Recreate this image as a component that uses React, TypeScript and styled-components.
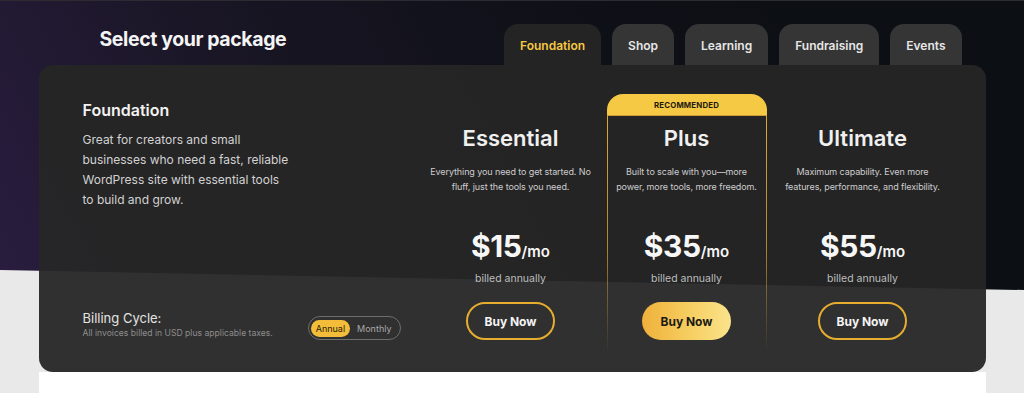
import React from "react";
import styled, { createGlobalStyle } from "styled-components";

const GlobalStyle = createGlobalStyle`
  html, body {
    margin: 0;
    padding: 0;
    background: #e9e9e9;
    overflow: hidden;
  }
  body {
    font-family: Inter, "Noto Sans", sans-serif;
    -webkit-font-smoothing: antialiased;
  }
`;

const Page = styled.div`
  position: relative;
  padding-top: 24px;

  /* slanted dark hero behind the card */
  &::before {
    content: "";
    position: absolute;
    top: 0;
    left: 0;
    right: 0;
    height: 290px;
    background: linear-gradient(62deg, #2a1d40 0%, #1a1626 28%, #101119 55%, #0c0f14 80%);
    clip-path: polygon(0 0, 100% 0, 100% 290px, 0 270px);
    border-top: 1px solid #2b2b31;
  }
`;

const Container = styled.div`
  position: relative;
  width: 947px;
  margin: 0 auto;
`;

const HeaderRow = styled.div`
  display: flex;
  justify-content: space-between;
  align-items: flex-start;
  padding: 0 24px 0 61px;
`;

const Heading = styled.h1`
  margin: 3px 0 0;
  font-size: 19.5px;
  line-height: 24px;
  font-weight: 700;
  color: #f4f4f4;
  letter-spacing: -0.4px;
`;

const Tabs = styled.div`
  display: flex;
  gap: 11px;
`;

const Tab = styled.button<{ $active?: boolean }>`
  height: 41px;
  padding: 2px 16px 0;
  border: 0;
  border-radius: 14px 14px 0 0;
  background: ${(p) => (p.$active ? "rgba(38, 38, 38, 0.95)" : "#353535")};
  color: ${(p) => (p.$active ? "#f5c842" : "#e6e6e6")};
  font-family: inherit;
  font-size: 12px;
  font-weight: 600;
  cursor: pointer;
`;

const Card = styled.section`
  display: grid;
  grid-template-columns: 1fr 160px 160px 160px;
  column-gap: 16px;
  height: 307px;
  box-sizing: border-box;
  padding: 29px 43px 20px 44px;
  background: rgba(38, 38, 38, 0.95);
  border-radius: 14px;
`;

const Intro = styled.div`
  display: flex;
  flex-direction: column;
  padding: 6px 14px 12px 0;
`;

const IntroTitle = styled.h2`
  margin: 0;
  font-size: 16px;
  line-height: 20px;
  font-weight: 600;
  color: #f2f2f2;
`;

const IntroText = styled.p`
  margin: 10px 0 0;
  max-width: 206px;
  font-size: 12px;
  line-height: 20px;
  color: #d2d2d2;
`;

const BillingRow = styled.div`
  margin-top: auto;
  display: flex;
  justify-content: space-between;
  align-items: flex-end;
`;

const BillingLabel = styled.div`
  font-size: 13px;
  line-height: 18px;
  color: #e4e4e4;
`;

const BillingNote = styled.div`
  font-size: 8.6px;
  line-height: 13px;
  color: #8e8e8e;
`;

const Toggle = styled.div`
  display: flex;
  align-items: center;
  height: 24px;
  box-sizing: border-box;
  padding: 0 2px;
  border: 1px solid #6e6e6e;
  border-radius: 12px;
`;

const ToggleOption = styled.span<{ $on?: boolean }>`
  display: flex;
  align-items: center;
  height: 17px;
  padding: ${(p) => (p.$on ? "0 5px" : "0 6px 0 7px")};
  border-radius: 9px;
  background: ${(p) => (p.$on ? "#f3bd3a" : "transparent")};
  color: ${(p) => (p.$on ? "#2a2206" : "#a8a8a8")};
  font-size: 9px;
`;

const Plan = styled.div<{ $featured?: boolean }>`
  display: flex;
  flex-direction: column;
  padding-top: ${(p) => (p.$featured ? "0" : "22px")};
`;

const Ribbon = styled.div`
  height: 22px;
  display: flex;
  align-items: center;
  justify-content: center;
  background: #f6c945;
  border-radius: 16px 16px 0 0;
  border-bottom: 1px solid #caa036;
  box-sizing: border-box;
  font-size: 7.8px;
  font-weight: 700;
  letter-spacing: 0.2px;
  color: #1d1a10;
`;

const PlanBody = styled.div<{ $featured?: boolean }>`
  flex: 1;
  display: flex;
  flex-direction: column;
  align-items: center;
  text-align: center;
  box-sizing: border-box;
  border-style: solid;
  border-width: 0 ${(p) => (p.$featured ? "1px" : "0")};
  border-image: ${(p) =>
    p.$featured
      ? "linear-gradient(to bottom, #e0a92f 0%, rgba(224,169,47,0.75) 55%, rgba(224,169,47,0) 100%) 1"
      : "none"};
`;

const PlanName = styled.h3`
  margin: 8px 0 0;
  font-size: 22px;
  line-height: 28px;
  font-weight: 600;
  color: #f0f0f0;
`;

const PlanText = styled.p`
  margin: 12px -10px 0;
  font-size: 9px;
  line-height: 15px;
  color: #cdcdcd;
  letter-spacing: -0.1px;
  white-space: nowrap;
`;

const Price = styled.div`
  margin-top: 34px;
  font-size: 30px;
  line-height: 36px;
  font-weight: 700;
  color: #f7f7f7;
  letter-spacing: -0.4px;
`;

const PerMonth = styled.span`
  font-size: 15px;
  font-weight: 600;
  letter-spacing: 0;
`;

const Billed = styled.div`
  margin-top: 1px;
  font-size: 10.5px;
  line-height: 16px;
  color: #bdbdbd;
`;

const BuyButton = styled.button<{ $filled?: boolean }>`
  margin-top: 15px;
  width: 89px;
  height: 38px;
  border-radius: 19px;
  border: ${(p) => (p.$filled ? "0" : "2px solid #e6ad2f")};
  background: ${(p) =>
    p.$filled ? "linear-gradient(90deg, #efb13b 0%, #f6cf62 55%, #fbe38c 100%)" : "transparent"};
  color: ${(p) => (p.$filled ? "#1c1a14" : "#f4f4f4")};
  font-family: inherit;
  font-size: 12px;
  font-weight: 700;
  cursor: pointer;
`;

const NextSection = styled.div`
  height: 21px;
  background: #ffffff;
`;

const tabs = ["Foundation", "Shop", "Learning", "Fundraising", "Events"];

const plans = [
  {
    name: "Essential",
    lines: ["Everything you need to get started. No", "fluff, just the tools you need."],
    price: 15,
  },
  {
    name: "Plus",
    lines: ["Built to scale with you\u2014more", "power, more tools, more freedom."],
    price: 35,
    featured: true,
  },
  {
    name: "Ultimate",
    lines: ["Maximum capability. Even more", "features, performance, and flexibility."],
    price: 55,
  },
];

export default function App() {
  return (
    <>
      <GlobalStyle />
      <Page>
        <Container>
          <HeaderRow>
            <Heading>Select your package</Heading>
            <Tabs>
              {tabs.map((t, i) => (
                <Tab key={t} $active={i === 0}>
                  {t}
                </Tab>
              ))}
            </Tabs>
          </HeaderRow>

          <Card>
            <Intro>
              <IntroTitle>Foundation</IntroTitle>
              <IntroText>
                Great for creators and small businesses who need a fast, reliable WordPress site with
                essential tools to build and grow.
              </IntroText>
              <BillingRow>
                <div>
                  <BillingLabel>Billing Cycle:</BillingLabel>
                  <BillingNote>All invoices billed in USD plus applicable taxes.</BillingNote>
                </div>
                <Toggle>
                  <ToggleOption $on>Annual</ToggleOption>
                  <ToggleOption>Monthly</ToggleOption>
                </Toggle>
              </BillingRow>
            </Intro>

            {plans.map((p) => (
              <Plan key={p.name} $featured={p.featured}>
                {p.featured && <Ribbon>RECOMMENDED</Ribbon>}
                <PlanBody $featured={p.featured}>
                  <PlanName>{p.name}</PlanName>
                  <PlanText>
                    {p.lines[0]}
                    <br />
                    {p.lines[1]}
                  </PlanText>
                  <Price>
                    ${p.price}
                    <PerMonth>/mo</PerMonth>
                  </Price>
                  <Billed>billed annually</Billed>
                  <BuyButton $filled={p.featured}>Buy Now</BuyButton>
                </PlanBody>
              </Plan>
            ))}
          </Card>
          <NextSection />
        </Container>
      </Page>
    </>
  );
}
